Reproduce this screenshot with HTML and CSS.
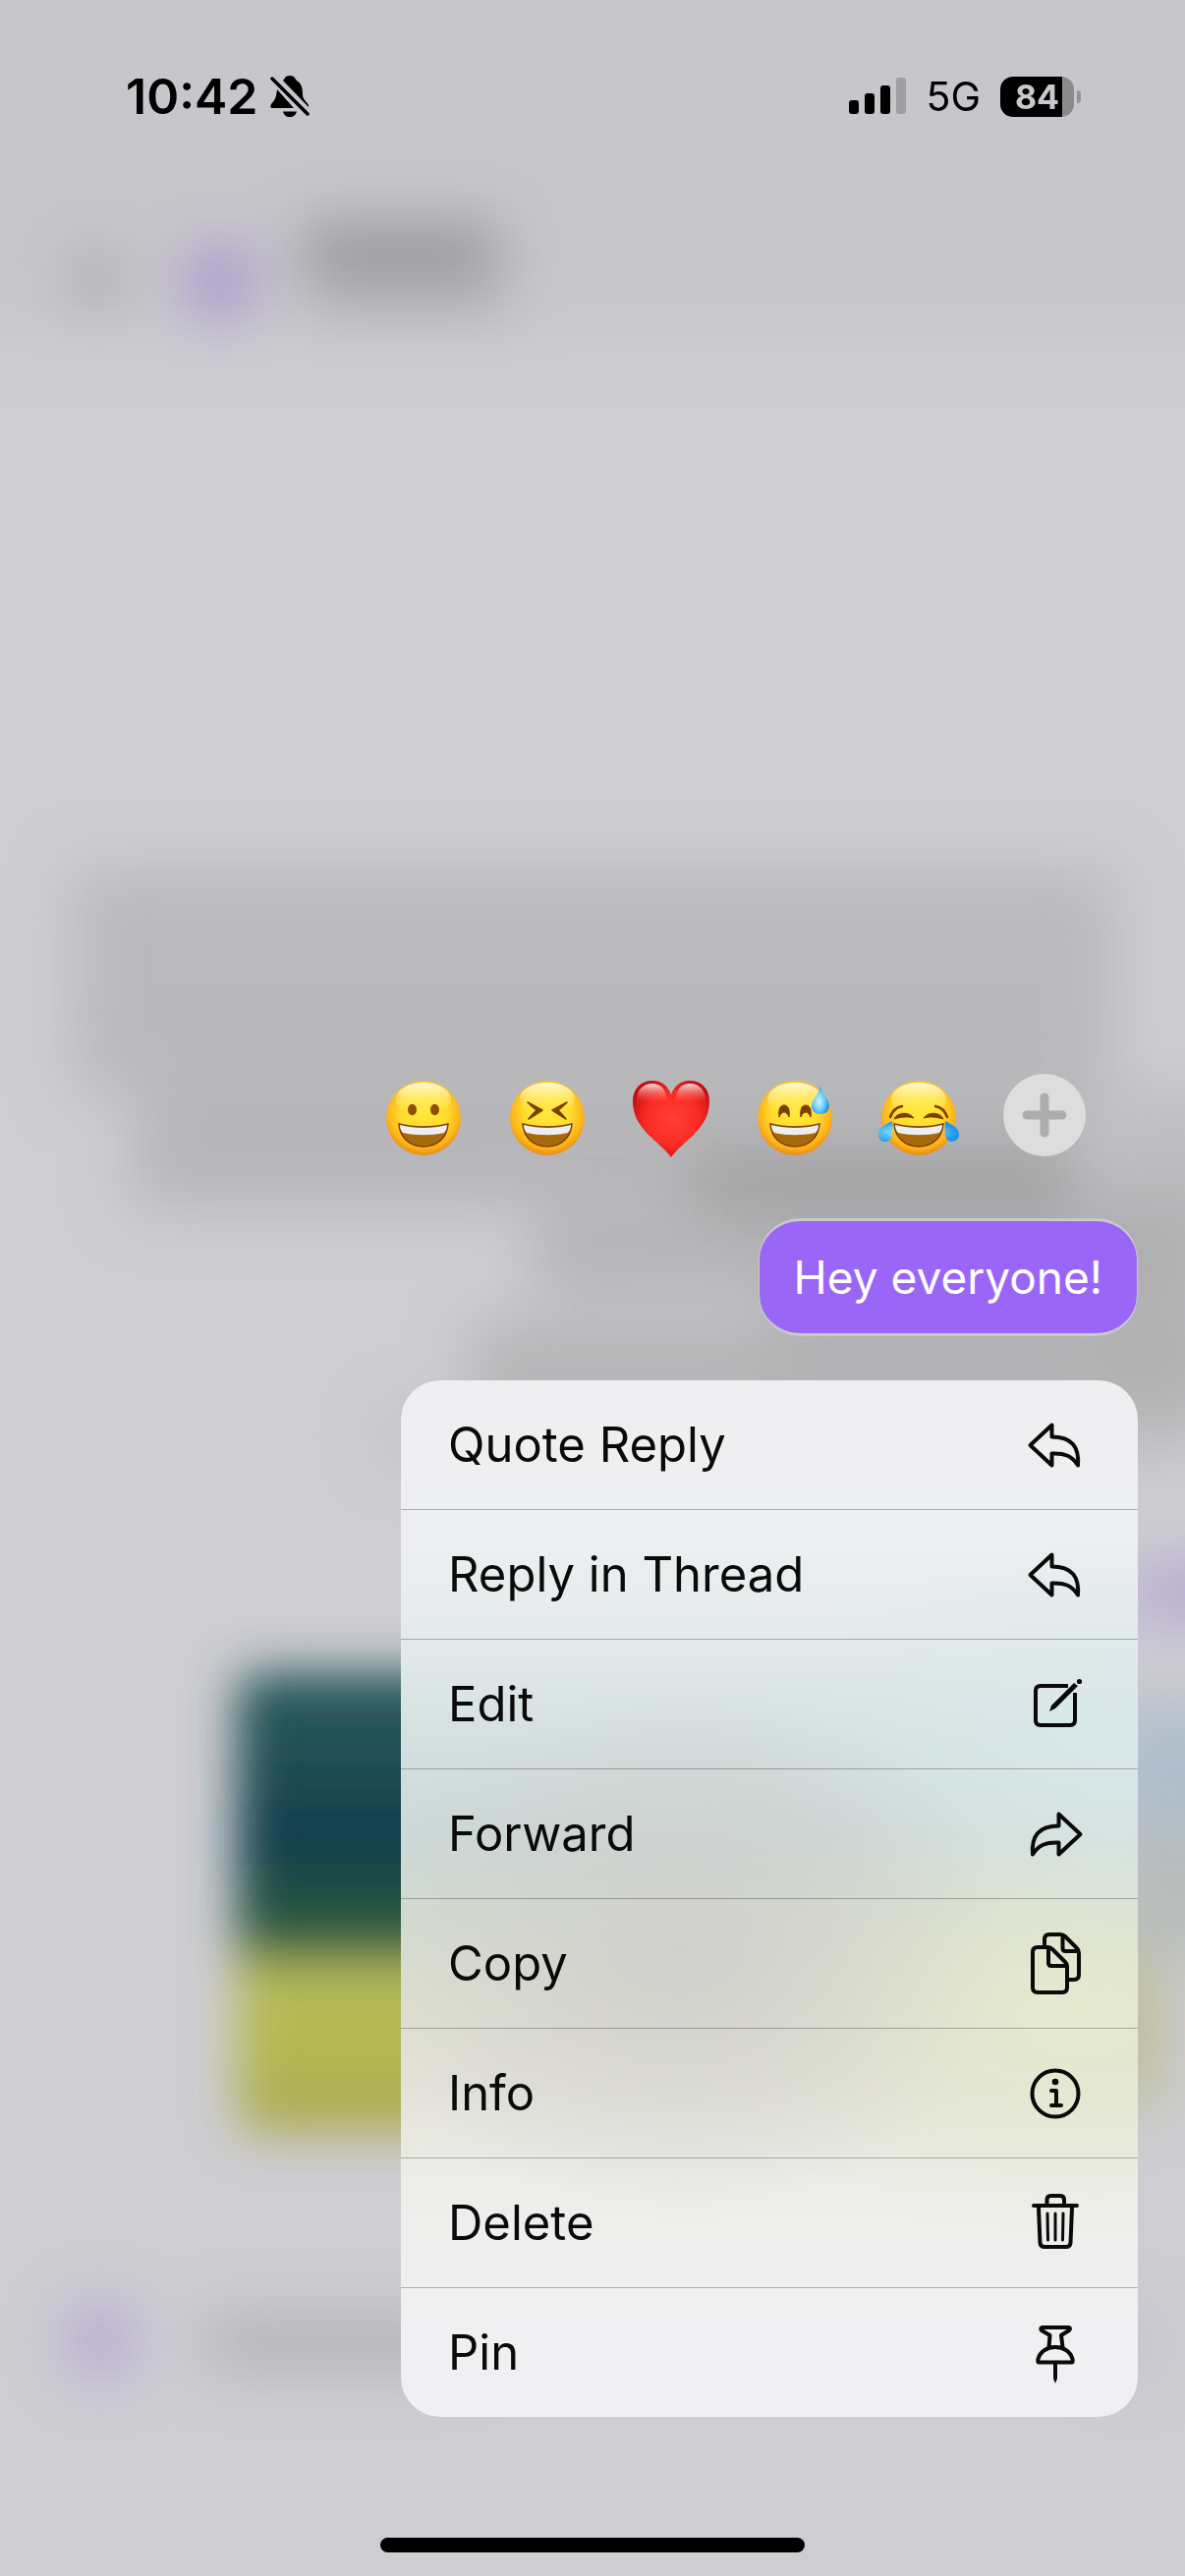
FILE: index.html
```html
<!DOCTYPE html>
<html lang="en">
<head>
  <meta charset="UTF-8">
  <meta name="viewport" content="width=device-width, initial-scale=1.0">
  <title>Message actions</title>
  <link rel="stylesheet" href="styles.css">
</head>
<body>
  <!-- blurred conversation behind the menu -->
  <svg class="backdrop" viewBox="0 0 1206 2622" preserveAspectRatio="none" aria-hidden="true">
    <defs>
      <filter id="blur" x="-20%" y="-20%" width="140%" height="140%"><feGaussianBlur stdDeviation="30"/></filter>
      <filter id="blur-image" x="-20%" y="-20%" width="140%" height="140%"><feGaussianBlur stdDeviation="24"/></filter>
      <linearGradient id="photo" x1="0" y1="0" x2="0" y2="1">
        <stop offset="0" stop-color="#29595c"/>
        <stop offset=".15" stop-color="#235155"/>
        <stop offset=".38" stop-color="#123c4d"/>
        <stop offset=".5" stop-color="#24543f"/>
        <stop offset=".6" stop-color="#2c5c44"/>
        <stop offset=".64" stop-color="#b6b95a"/>
        <stop offset=".8" stop-color="#b5ba50"/>
        <stop offset="1" stop-color="#aaa956"/>
      </linearGradient>
      <linearGradient id="page" x1="0" y1="0" x2="0" y2="1">
        <stop offset="0" stop-color="#bababd"/>
        <stop offset=".5" stop-color="#b9b9bc"/>
        <stop offset="1" stop-color="#b5b5b8"/>
      </linearGradient>
    </defs>
    <rect width="1206" height="2622" fill="#cecdd2"/>
    <g filter="url(#blur)">
      <rect x="-100" y="-100" width="1406" height="440" fill="#c7c6cb"/>
      <rect x="75" y="258" width="44" height="54" fill="#a2a2a5"/>
      <circle cx="223" cy="287" r="38" fill="#a791cf"/>
      <rect x="305" y="225" width="205" height="60" fill="#98989b"/>
      <rect x="315" y="285" width="205" height="40" fill="#b5b5b8"/>
      <path fill="url(#page)" d="M75 885H1135V1110H1110V1228H135V1110H75Z"/>
      <path fill="#9d9d9e" opacity=".8" d="M700 1170H1090V1260H700Z"/>
      <path fill="#b5b5b8" d="M540 1235H1230V1320H540Z"/>
      <path fill="#b5b5b7" d="M480 1345H1230V1470H480Z"/>
      <path fill="#a4a4a6" d="M780 1200H1230V1400H780Z" opacity=".35"/>
      <path fill="#adadae" d="M1125 1110H1260V1430H1125Z" opacity=".5"/>
      <rect x="395" y="1440" width="800" height="40" fill="#bcbcbe"/>
      <rect x="1150" y="1594" width="130" height="54" fill="#b4a6d3"/>
      <rect x="1130" y="1735" width="130" height="130" fill="#aebdcb"/>
      <rect x="1130" y="1865" width="130" height="125" fill="#b7bcba"/>
      <rect x="1100" y="1990" width="85" height="150" fill="#bdbf9a"/>
      <circle cx="102" cy="2382" r="32" fill="#ae9dd6"/>
      <rect x="210" y="2362" width="260" height="44" fill="#adadb1"/>
      <rect x="1130" y="2360" width="40" height="50" fill="#bfb9d3"/>
    </g>
    <rect x="241" y="1702" width="560" height="470" rx="24" fill="url(#photo)" filter="url(#blur-image)"/>
  </svg>

  <div class="screen">
    <header class="status-bar">
      <div class="status-left">
        <span class="time">10:42</span>
        <svg class="bell" viewBox="0 0 40 44" role="img" aria-label="Silent mode">
          <path d="M7 15 24 34H2C0 34 0 32 1 30 4 26 6 25 7 15ZM13 6C15 4 15 1 20 1S25 4 27 6C32 9 33 14 33 20 33 25 36 26 39 31V33ZM13 37.500H27C26 41 24 43 20 43S14 41 13 37.500Z"/>
          <path d="M2 4 38 40" fill="none" stroke="#000" stroke-width="3.500" stroke-linecap="round"/>
        </svg>
      </div>
      <div class="status-right">
        <svg class="signal" viewBox="0 0 58 38" role="img" aria-label="Signal strength">
          <rect x="0" y="23" width="10" height="14" rx="3"/>
          <rect x="16" y="16" width="10" height="21" rx="3"/>
          <rect x="32" y="8" width="10" height="29" rx="3"/>
          <rect x="48" y="0" width="10" height="37" rx="3" fill="#9f9fa2"/>
        </svg>
        <span class="network">5G</span>
        <div class="battery"><span class="battery-level">84</span></div>
      </div>
    </header>

    <main class="context">
      <div class="reactions">
        <svg class="defs" aria-hidden="true">
          <defs>
            <radialGradient id="face" cx=".5" cy=".42" r=".62">
              <stop offset="0" stop-color="#ffe838"/>
              <stop offset=".5" stop-color="#ffdc2b"/>
              <stop offset=".78" stop-color="#fcb41c"/>
              <stop offset="1" stop-color="#e5780c"/>
            </radialGradient>
            <linearGradient id="shine" x1="0" y1="0" x2="0" y2="1">
              <stop offset="0" stop-color="#fffde0" stop-opacity=".95"/>
              <stop offset="1" stop-color="#ffec50" stop-opacity="0"/>
            </linearGradient>
            <radialGradient id="love" cx=".52" cy=".5" r=".58">
              <stop offset="0" stop-color="#ff3f35"/>
              <stop offset=".6" stop-color="#fb2b25"/>
              <stop offset="1" stop-color="#c40d0f"/>
            </radialGradient>
            <linearGradient id="gloss" x1="0" y1="0" x2="0" y2="1">
              <stop offset="0" stop-color="#fff" stop-opacity=".85"/>
              <stop offset="1" stop-color="#ff5a50" stop-opacity="0"/>
            </linearGradient>
            <radialGradient id="tear" cx=".42" cy=".55" r=".55">
              <stop offset="0" stop-color="#d6f4ff"/>
              <stop offset=".55" stop-color="#6fd0fd"/>
              <stop offset="1" stop-color="#1c98ee"/>
            </radialGradient>
            <g id="head">
              <circle cx="42" cy="42" r="38" fill="url(#face)"/>
              <ellipse cx="42" cy="23" rx="28" ry="17" fill="url(#shine)"/>
            </g>
            <g id="grin">
              <path d="M17 48C32 52 52 52 67 48 66 62 56 71 42 71S18 62 17 48Z" fill="#a9680b" stroke="#7b3f04" stroke-width="1.500"/>
              <path d="M18 49C33 53 51 53 66 49 66 52 65 55 63 57 50 60 34 60 21 57 19 55 18 52 18 49Z" fill="#eceef3"/>
            </g>
          </defs>
        </svg>
        <button class="reaction" aria-label="Grinning face">
          <svg viewBox="0 0 84 84">
            <use href="#head"/><use href="#grin"/>
            <ellipse cx="30.500" cy="33.500" rx="4.500" ry="5.700" fill="#8b4f05"/>
            <ellipse cx="53.500" cy="33.500" rx="4.500" ry="5.700" fill="#8b4f05"/>
          </svg>
        </button>
        <button class="reaction" aria-label="Squinting face">
          <svg viewBox="0 0 84 84">
            <use href="#head"/><use href="#grin"/>
            <path d="M22 26 37 34 23 43C26 39 29 36 31 34 28 32 25 29 22 26ZM62 26 47 34 61 43C58 39 55 36 53 34 56 32 59 29 62 26Z" fill="#7b3f04" stroke="#7b3f04" stroke-width="1.500" stroke-linejoin="round"/>
          </svg>
        </button>
        <button class="reaction" aria-label="Red heart">
          <svg viewBox="0 0 84 84">
            <path d="M42 82C31 66 3 54 3 25 3 12 11 4 23 4 33 4 39 10 42 18 45 10 51 4 61 4 73 4 81 12 81 25 81 54 53 66 42 82Z" fill="url(#love)"/>
            <path d="M7 27C6 14 13 7 23 7 32 7 37 13 38 25 29 24 17 25 7 27ZM46 25C47 13 52 7 61 7 71 7 78 14 77 27 67 25 55 24 46 25Z" fill="url(#gloss)"/>
          </svg>
        </button>
        <button class="reaction" aria-label="Grinning face with sweat">
          <svg viewBox="0 0 84 84">
            <use href="#head"/><use href="#grin"/>
            <path d="M26 41C25 33 27 29 31 29S37 33 36 41C35 38 33 36 31 36S27 38 26 41ZM48 41C47 33 49 29 53 29S59 33 58 41C57 38 55 36 53 36S49 38 48 41Z" fill="#7b3f04" stroke="#7b3f04" stroke-linejoin="round"/>
            <path d="M68 9C69 18 77 22 77 30 77 35 73 38 68 38S59 35 59 30C59 22 67 18 68 9Z" fill="url(#tear)"/>
          </svg>
        </button>
        <button class="reaction" aria-label="Face with tears of joy">
          <svg viewBox="0 0 84 84">
            <use href="#head"/><use href="#grin"/>
            <path d="M17 43C20 36 32 35 37 42 30 40 24 41 17 43ZM67 43C64 36 52 35 47 42 54 40 60 41 67 43Z" fill="#7b3f04" stroke="#7b3f04" stroke-linejoin="round"/>
            <path d="M13 41C15 35 19 31 25 30M71 41C69 35 65 31 59 30" fill="none" stroke="#7b3f04" stroke-width="2.500" stroke-linecap="round"/>
            <path d="M15 45C5 50 1 53 1 59 1 63 4 66 8 66 16 66 16 56 15 45ZM69 45C79 50 83 53 83 59 83 63 80 66 76 66 68 66 68 56 69 45Z" fill="url(#tear)"/>
          </svg>
        </button>
        <button class="reaction more" aria-label="More reactions">
          <svg viewBox="0 0 84 84"><path d="M42 24V60M24 42H60" fill="none" stroke="#adadb0" stroke-width="9" stroke-linecap="round"/></svg>
        </button>
      </div>

      <div class="bubble">Hey everyone!</div>

      <div class="menu">
        <button class="menu-item">Quote Reply
          <svg class="icon" viewBox="0 0 72 72"><path d="M32.500 15.500 10.500 36 32.500 56.500V44.500C46 44 53 47 59 56.500 60.500 38 53 27.500 32.500 27.500Z"/></svg>
        </button>
        <button class="menu-item">Reply in Thread
          <svg class="icon" viewBox="0 0 72 72"><path d="M32.500 15.500 10.500 36 32.500 56.500V44.500C46 44 53 47 59 56.500 60.500 38 53 27.500 32.500 27.500Z"/></svg>
        </button>
        <button class="menu-item">Edit
          <svg class="icon" viewBox="0 0 72 72">
            <path class="butt" d="M49 17H21Q16 17 16 22V52Q16 57 21 57H51Q56 57 56 52V24"/>
            <path class="solid" d="M30 43 32 37 55 14 59 17 36 40Z"/>
            <circle class="solid" cx="60.500" cy="12.500" r="2.600"/>
          </svg>
        </button>
        <button class="menu-item">Forward
          <svg class="icon" viewBox="0 0 72 72"><path d="M39.500 15.500 61.500 36 39.500 56.500V44.500C26 44 19 47 13 56.500 11.500 38 19 27.500 39.500 27.500Z"/></svg>
        </button>
        <button class="menu-item">Copy
          <svg class="icon" viewBox="0 0 72 72">
            <path d="M18 19H29Q31 19 33 21L46 34Q48 36 48 38V60Q48 65 43 65H18Q13 65 13 60V24Q13 19 18 19ZM29 20V35Q29 38 32 38H47"/>
            <path class="butt" d="M25 18V11Q25 6 30 6H41Q44 6 46 8L58 20Q60 22 60 25V47Q60 52 55 52H50M43.500 7V20Q43.500 23 46.500 23H59"/>
          </svg>
        </button>
        <button class="menu-item">Info
          <svg class="icon" viewBox="0 0 72 72">
            <circle cx="36" cy="36" r="23.500"/>
            <circle class="solid" cx="36" cy="24" r="3.300"/>
            <path d="M32 33H37V48M32 48H42"/>
          </svg>
        </button>
        <button class="menu-item">Delete
          <svg class="icon" viewBox="0 0 72 72">
            <path d="M14 18H58M27.500 17V12Q27.500 8 31.500 8H41Q45 8 45 12V17M19 20 20.500 56Q21 60 25 60H47Q51 60 51.500 56L53 20"/>
            <path class="thin" d="M28 26 28.500 53M36 26V53M44 26 43.500 53"/>
          </svg>
        </button>
        <button class="menu-item">Pin
          <svg class="icon" viewBox="0 0 72 72">
            <path d="M23 10H50Q52 11 50 13L42 18 43.500 30M23 10Q20 11 22 13L30.500 18 29.500 30M19 45.500Q18 45.500 18.500 42C23 26 49 26 53.500 42Q54 45.500 53 45.500Z"/>
            <path class="solid" d="M34 46H38V62L36 67 34 62Z"/>
          </svg>
        </button>
      </div>
    </main>

    <div class="home-indicator"></div>
  </div>
</body>
</html>
```
FILE: styles.css
```css
* {
  box-sizing: border-box;
}

body {
  margin: 0;
  background-color: #cecdd2;
  color: #0a0a0a;
  font-family: Inter, "Liberation Sans", sans-serif;
}

button {
  border: none;
  padding: 0;
  background: none;
  color: inherit;
  font: inherit;
  cursor: pointer;
}

.backdrop {
  position: fixed;
  top: 0;
  left: 0;
  width: 100%;
  height: 100%;
}

.defs {
  position: absolute;
  width: 0;
  height: 0;
}

.screen {
  position: relative;
  display: flex;
  flex-direction: column;
  min-height: 100vh;
  padding-bottom: 24px;
}

/* status bar */
.status-bar {
  display: flex;
  justify-content: space-between;
  align-items: center;
  padding: 66px 106px 0 128px;
  height: 130px;
  color: #000;
}

.status-left,
.status-right {
  display: flex;
  align-items: center;
}

.status-left {
  gap: 12px;
}

.time {
  font-size: 50px;
  font-weight: 600;
}

.bell {
  width: 40px;
  height: 44px;
}

.signal {
  width: 58px;
  height: 38px;
  margin-right: 20px;
}

.network {
  margin-right: 20px;
  font-size: 41px;
}

.battery {
  position: relative;
  width: 75px;
  height: 41px;
  margin-right: 7px;
  border-radius: 13px;
  background: linear-gradient(to right, #000 84%, #8b8b8d 84%);
  text-align: center;
}

.battery::after {
  content: "";
  position: absolute;
  top: 14px;
  right: -7px;
  width: 4px;
  height: 13px;
  border-radius: 0 6px 6px 0;
  background-color: #929295;
}

.battery-level {
  color: #c8c7cc;
  font-size: 34px;
  font-weight: 700;
  line-height: 41px;
}

/* selected message with its menu */
.context {
  display: flex;
  flex-direction: column;
  align-items: flex-end;
  margin-top: auto;
  padding: 0 48px;
}

.reactions {
  display: flex;
  gap: 42px;
  padding-right: 53px;
}

.reaction {
  width: 84px;
  height: 84px;
  padding-top: 3px;
}

.reaction svg {
  display: block;
  width: 84px;
  height: 84px;
}

.more {
  margin-left: 2px;
  padding-top: 0;
  border-radius: 50%;
  background-color: #dddddd;
}

.bubble {
  margin-top: 63px;
  padding: 0 35px;
  border: solid #c9c8cd;
  border-width: 3px 1px;
  border-radius: 42px;
  background-color: #9966f7;
  color: #fff;
  font-size: 46px;
  line-height: 114px;
}

.menu {
  display: flex;
  flex-direction: column;
  width: 750px;
  max-width: 100%;
  margin-top: 45px;
  border-radius: 40px;
  overflow: hidden;
  background:
    radial-gradient(ellipse 44% 26% at 38% 55%, rgba(207, 206, 204, 0.9), rgba(207, 206, 204, 0)),
    radial-gradient(ellipse 50% 20% at 100% 35%, rgba(219, 233, 236, 0.9), rgba(219, 233, 236, 0)),
    radial-gradient(ellipse 55% 22% at 92% 61%, rgba(230, 235, 206, 0.9), rgba(230, 235, 206, 0)),
    linear-gradient(to bottom, #efeff1 0%, #eeeff1 14%, #e5ebec 24%, #d2dfde 36%, #ccd9d7 44%, #d3dbd0 51%, #dedfd0 60%, #e3e2d9 68%, #ededea 78%, #f0f0f2 90%, #f0eff3 100%);
}

.menu-item {
  display: flex;
  justify-content: space-between;
  align-items: center;
  height: 132px;
  padding: 0 48px;
  border-bottom: 1px solid rgba(0, 0, 0, 0.27);
  font-size: 49px;
  text-align: left;
}

.menu-item:last-child {
  height: 131px;
  border-bottom: none;
}

.icon {
  width: 72px;
  height: 72px;
  fill: none;
  stroke: #0a0a0a;
  stroke-width: 4;
  stroke-linecap: round;
  stroke-linejoin: round;
}

.icon .butt {
  stroke-linecap: butt;
}

.icon .thin {
  stroke-width: 3;
}

.icon .solid {
  fill: #0a0a0a;
  stroke: none;
}

.home-indicator {
  width: 432px;
  height: 15px;
  margin: 123px auto 0;
  border-radius: 8px;
  background-color: #000;
}
```
